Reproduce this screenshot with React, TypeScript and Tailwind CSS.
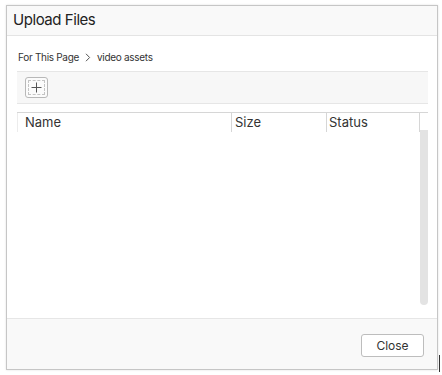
// Upload Files dialog — static recreation

const font = "font-['Inter','Liberation_Sans',sans-serif]";

function PlusButton() {
  return (
    <button
      type="button"
      className="flex h-[21px] w-[23px] items-center justify-center rounded-[3px] border border-[#b8b8b8] bg-[#fbfbfb] p-[2px]"
    >
      <span className="flex h-full w-full items-center justify-center border border-dashed border-[#c4c4c4]">
        <svg width="11" height="11" viewBox="0 0 11 11" aria-hidden>
          <path d="M5.5 0.5v10M0.5 5.5h10" stroke="#555" strokeWidth="1" />
        </svg>
      </span>
    </button>
  );
}

export default function App() {
  return (
    <div className={`relative h-[375px] w-[442px] bg-white pl-[6px] pt-[5px] ${font}`}>
      {/* dialog */}
      <div className="flex h-[365px] w-[432px] flex-col border border-[#c6c6c6] bg-white shadow-[0_0_2px_rgba(0,0,0,0.12)]">
        {/* header */}
        <div className="flex h-[30px] shrink-0 items-center border-b border-[#e4e4e4] bg-[#f9f9f9] pl-[6px]">
          <h2 className="text-[15px] tracking-[-0.45px] text-[#222]">Upload Files</h2>
        </div>

        {/* body */}
        <div className="flex min-h-0 flex-1 flex-col pl-[10px] pr-[9px] pt-[13px]">
          <div className="flex h-[16px] items-center gap-[6px] pl-[1px] text-[10px] tracking-[-0.3px] text-[#333]">
            <span>For This Page</span>
            <svg width="6" height="9" viewBox="0 0 6 9" aria-hidden>
              <path d="M1 0.8l3.6 3.7L1 8.2" fill="none" stroke="#555" strokeWidth="1" />
            </svg>
            <span>video assets</span>
          </div>

          {/* toolbar */}
          <div className="mt-[6px] flex h-[33px] items-center border-y border-[#e6e6e6] bg-[#f7f7f7] pl-[8px]">
            <PlusButton />
          </div>

          {/* table */}
          <div className="mt-[8px] flex h-[195px] flex-col">
            <div className="flex h-[20px] border-t border-[#d6d6d6] text-[13px] text-[#333]">
              <div className="flex w-[214px] items-center border-l border-[#ececec] pl-[7px]">Name</div>
              <div className="flex w-[95px] items-center border-l border-[#d6d6d6] pl-[3px]">Size</div>
              <div className="flex w-[93px] items-center border-l border-[#d6d6d6] pl-[2px]">Status</div>
              <div className="flex-1 border-l border-[#d6d6d6]" />
            </div>
            <div className="flex flex-1 justify-end">
              <div className="mt-[-2px] h-[175px] w-[8px] rounded-b-[4px] bg-[#e3e3e3]" />
            </div>
          </div>
        </div>

        {/* footer */}
        <div className="flex h-[51px] shrink-0 items-center justify-end border-t border-[#e6e6e6] bg-[#f9f9f9] pr-[13px]">
          <button
            type="button"
            className="mt-[3px] h-[23px] w-[63px] rounded-[3px] border border-[#bdbdbd] bg-white text-[12px] text-[#333]"
          >
            Close
          </button>
        </div>
      </div>

      {/* resize grip mark */}
      <div className="absolute left-[439px] top-[355px] h-[17px] w-[1px] bg-[#333]" />
    </div>
  );
}
